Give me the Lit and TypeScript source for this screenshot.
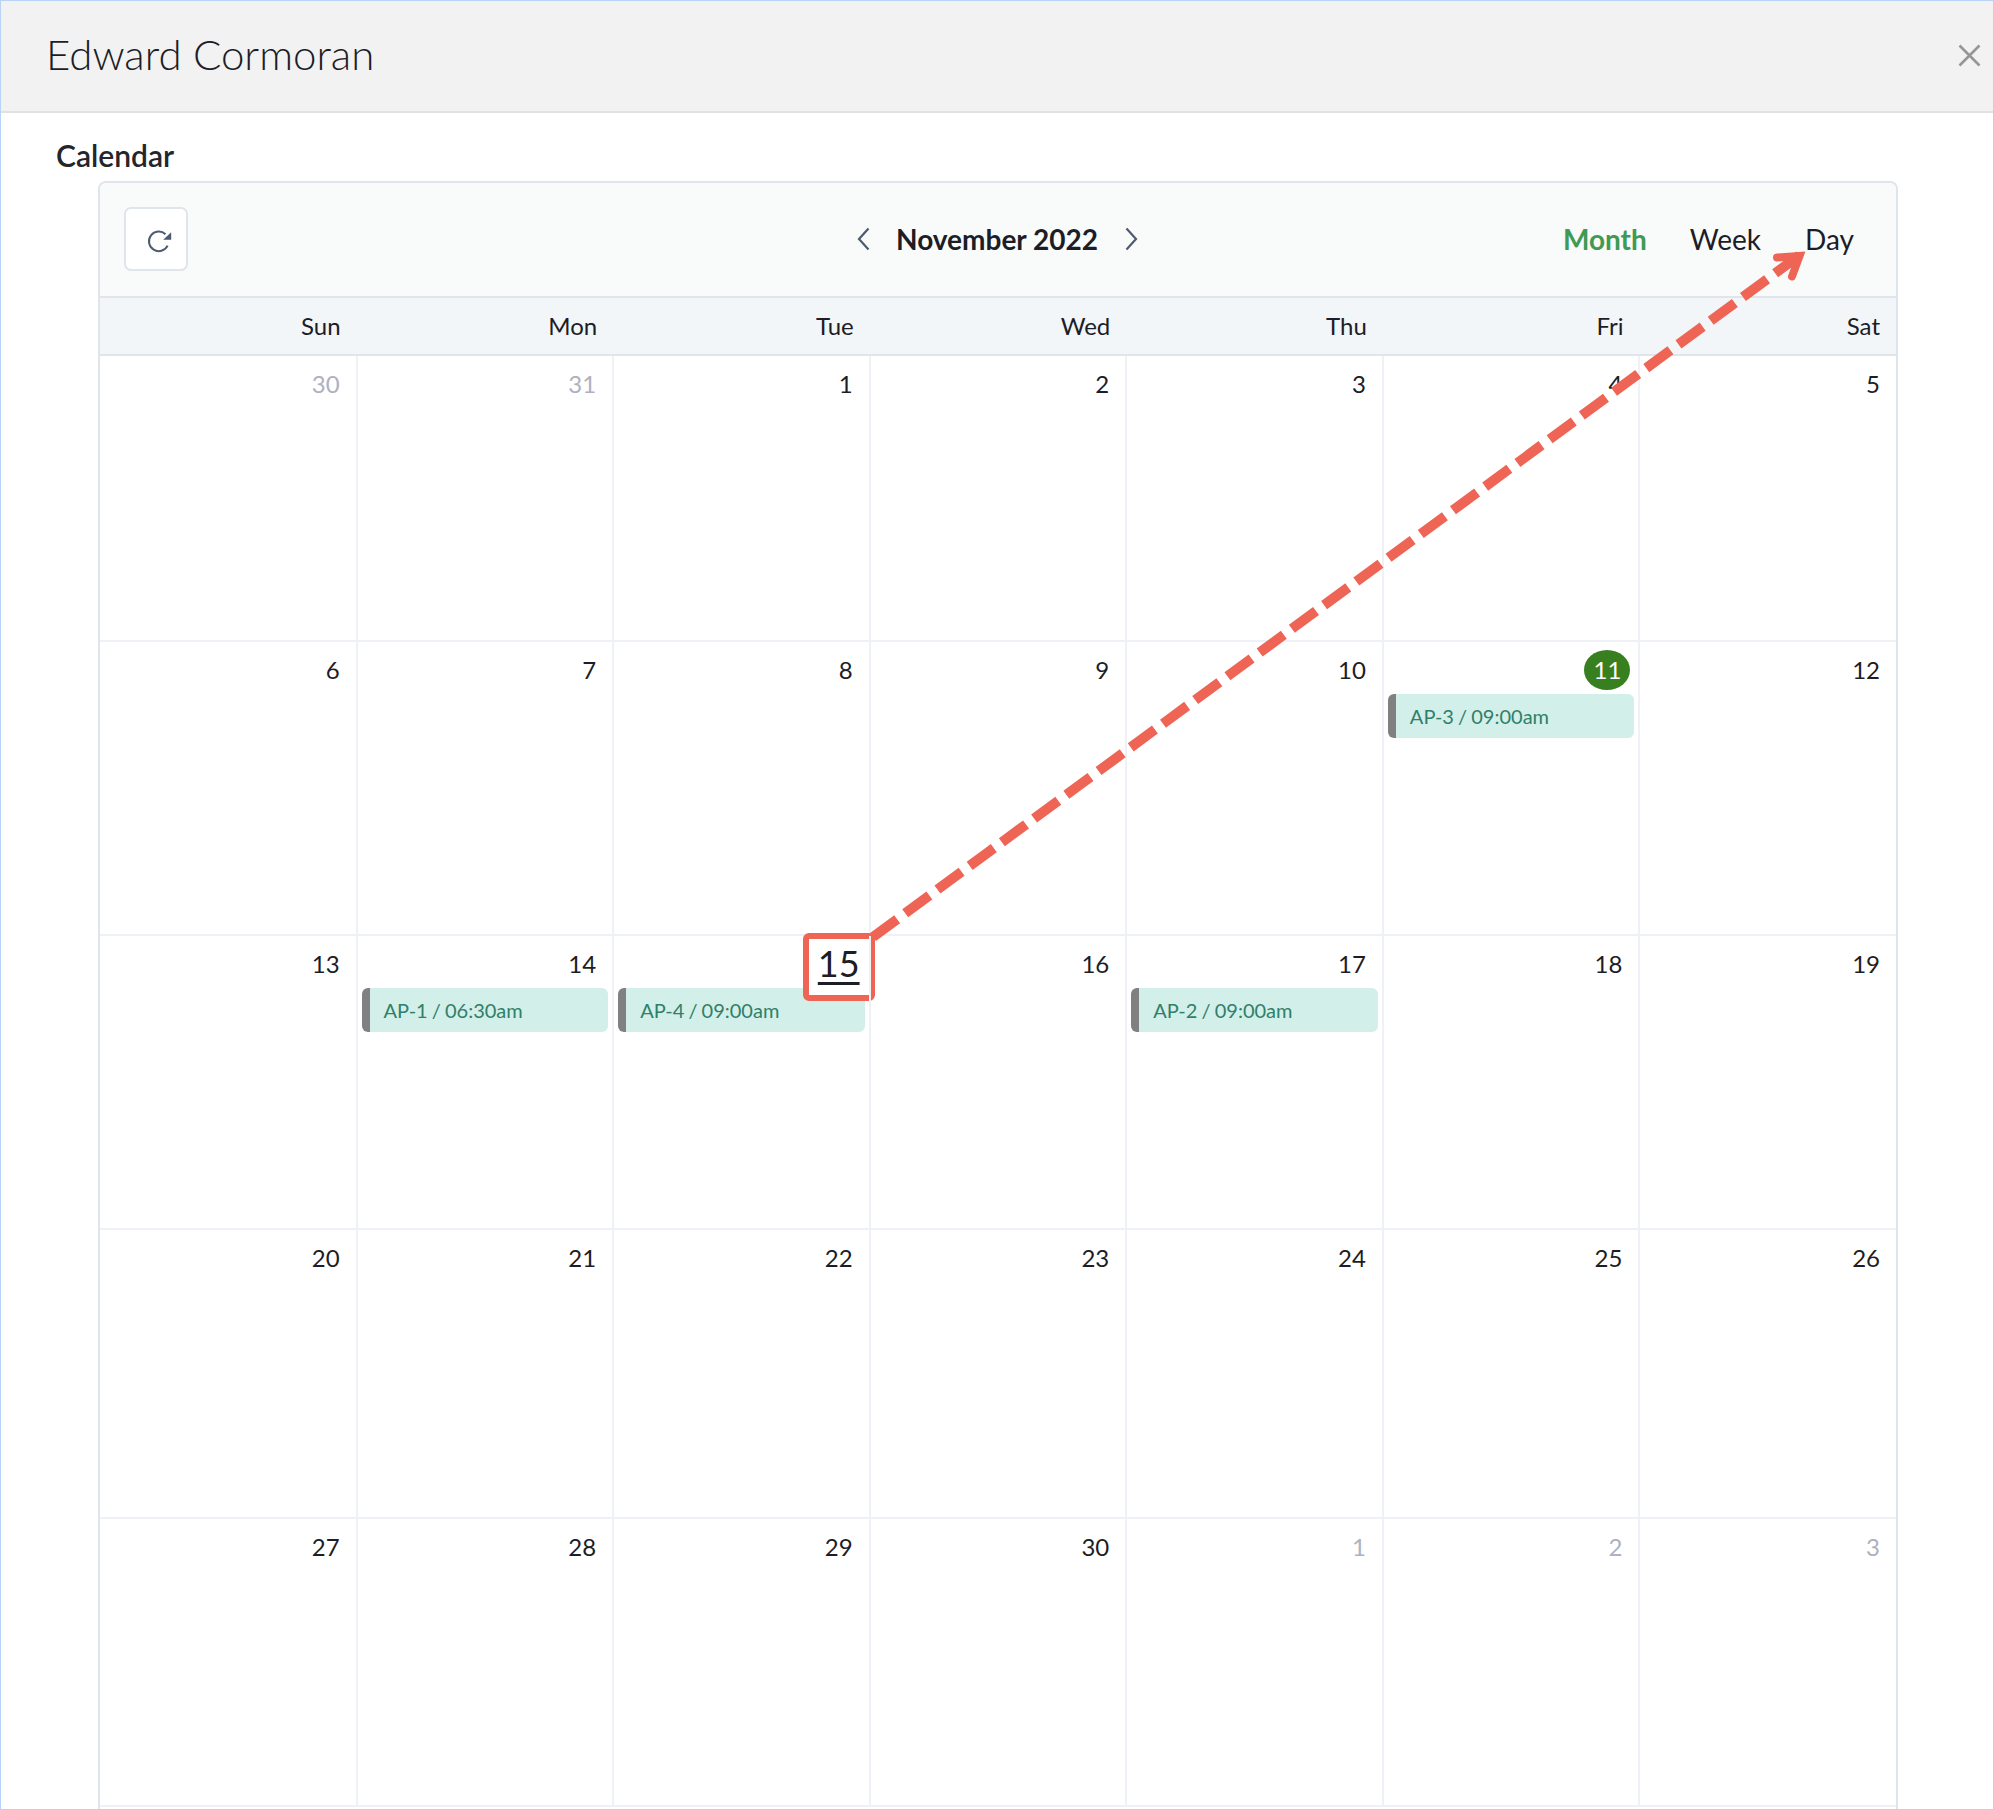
import { css, html, LitElement, nothing, svg } from "lit";
import { customElement } from "lit/decorators.js";

interface CalEvent {
  label: string;
}

interface DayCell {
  day: number;
  muted?: boolean;
  today?: boolean;
  marked?: boolean;
  event?: CalEvent;
}

const WEEKDAYS = ["Sun", "Mon", "Tue", "Wed", "Thu", "Fri", "Sat"];
const ROW_HEIGHTS = [286, 294, 294, 289, 288];

const WEEKS: DayCell[][] = [
  [
    { day: 30, muted: true },
    { day: 31, muted: true },
    { day: 1 },
    { day: 2 },
    { day: 3 },
    { day: 4 },
    { day: 5 },
  ],
  [
    { day: 6 },
    { day: 7 },
    { day: 8 },
    { day: 9 },
    { day: 10 },
    { day: 11, today: true, event: { label: "AP-3 / 09:00am" } },
    { day: 12 },
  ],
  [
    { day: 13 },
    { day: 14, event: { label: "AP-1 / 06:30am" } },
    { day: 15, marked: true, event: { label: "AP-4 / 09:00am" } },
    { day: 16 },
    { day: 17, event: { label: "AP-2 / 09:00am" } },
    { day: 18 },
    { day: 19 },
  ],
  [
    { day: 20 },
    { day: 21 },
    { day: 22 },
    { day: 23 },
    { day: 24 },
    { day: 25 },
    { day: 26 },
  ],
  [
    { day: 27 },
    { day: 28 },
    { day: 29 },
    { day: 30 },
    { day: 1, muted: true },
    { day: 2, muted: true },
    { day: 3, muted: true },
  ],
];

@customElement("app-root")
export class AppRoot extends LitElement {
  static override styles = css`
    :host {
      display: block;
      position: relative;
      box-sizing: border-box;
      width: 1994px;
      height: 1810px;
      overflow: hidden;
      background: #ffffff;
      border: 1px solid #b9d3f6;
      font-family: "Lato", "Liberation Sans", sans-serif;
      color: #1c1d26;
    }

    .header {
      display: flex;
      align-items: center;
      justify-content: space-between;
      box-sizing: border-box;
      height: 112px;
      padding: 0 12px 2px 45px;
      background: #f2f2f2;
      border-bottom: 2px solid #e1e1e1;
    }

    .header h1 {
      margin: -2px 0 0;
      font-size: 42px;
      font-weight: 300;
      line-height: 1;
    }

    .close {
      display: block;
      width: 23px;
      height: 23px;
      stroke: #969696;
      stroke-width: 2.6;
      fill: none;
    }

    .section-title {
      box-sizing: border-box;
      height: 68px;
      margin: 0;
      padding: 24px 0 0 55px;
      color: #24252d;
      font-size: 30px;
      font-weight: 600;
      line-height: 36px;
    }

    .calendar {
      box-sizing: border-box;
      width: 1800px;
      height: 1700px;
      margin-left: 97px;
      border: 2px solid #dfe5ea;
      border-bottom: none;
      border-radius: 8px 8px 0 0;
    }

    .toolbar {
      display: grid;
      grid-template-columns: 1fr auto 1fr;
      align-items: center;
      box-sizing: border-box;
      height: 115px;
      padding: 0 20px 2px 24px;
      background: #f9fbfa;
      border-bottom: 2px solid #dfe5ea;
      border-radius: 6px 6px 0 0;
    }

    .refresh {
      display: flex;
      align-items: center;
      justify-content: center;
      box-sizing: border-box;
      width: 64px;
      height: 64px;
      background: #ffffff;
      border: 2px solid #dfe5ea;
      border-radius: 7px;
    }

    .refresh svg {
      display: block;
      width: 32px;
      height: 32px;
      margin-left: -1px;
    }

    .month-nav {
      display: flex;
      align-items: center;
      gap: 26px;
      margin-right: 5px;
    }

    .month-nav svg {
      display: block;
      width: 13px;
      height: 24px;
      stroke: #4e5a70;
      stroke-width: 2.2;
      fill: none;
    }

    .month-nav svg:last-child {
      margin-left: 1px;
    }

    .month-name {
      font-size: 28px;
      font-weight: 700;
      line-height: 36px;
    }

    .views {
      display: flex;
      justify-content: flex-end;
    }

    .views span {
      padding: 0 22px;
      font-size: 28px;
      line-height: 36px;
    }

    .views .active {
      padding-right: 21px;
      color: #3f9a55;
      font-weight: 700;
    }

    .weekdays,
    .week {
      display: grid;
      grid-template-columns: repeat(7, 1fr);
    }

    .weekdays {
      box-sizing: border-box;
      height: 58px;
      background: #f3f6f8;
      border-bottom: 2px solid #dfe5ea;
    }

    .weekdays span {
      padding: 10px 16px 0 0;
      font-size: 24px;
      line-height: 36px;
      text-align: right;
    }

    .week {
      box-sizing: border-box;
      border-bottom: 2px solid #eef1f5;
    }

    .cell {
      position: relative;
      box-sizing: border-box;
      margin-left: -1px;
      padding-top: 8px;
      border-left: 2px solid #eef1f5;
    }

    .cell:first-child {
      margin-left: 0;
      border-left: none;
    }

    .date {
      display: flex;
      justify-content: flex-end;
      height: 40px;
      padding-right: 17px;
      font-size: 24px;
      line-height: 40px;
    }

    .cell:last-child .date {
      padding-right: 16px;
    }

    .date.muted {
      color: #aeb1c0;
    }

    .date .today {
      box-sizing: border-box;
      width: 46px;
      height: 40px;
      margin-right: -8px;
      background: #38801f;
      border-radius: 50%;
      color: #ffffff;
      text-align: center;
    }

    .event {
      box-sizing: border-box;
      height: 44px;
      margin: 4px 5px 0 4px;
      padding-left: 14px;
      background: #d3efe9;
      border-left: 8px solid #808080;
      border-radius: 6px;
      color: #2f8069;
      font-size: 20px;
      line-height: 44px;
      word-spacing: -1px;
    }

    .mark {
      position: absolute;
      top: -3px;
      right: -5px;
      display: flex;
      justify-content: center;
      box-sizing: border-box;
      width: 72px;
      height: 68px;
      background: #ffffff;
      border: 6px solid #ef6555;
      border-radius: 6px;
      font-size: 36px;
      line-height: 48px;
      text-decoration: underline;
      text-decoration-thickness: 2.5px;
      text-underline-offset: 5px;
    }

    .overlay {
      position: absolute;
      top: -1px;
      left: -1px;
      width: 1994px;
      height: 1810px;
      pointer-events: none;
    }
  `;

  private _renderCell(cell: DayCell) {
    return html`
      <div class="cell">
        <div class="date ${cell.muted ? "muted" : ""}">
          ${cell.today
            ? html`<span class="today">${cell.day}</span>`
            : cell.marked
              ? nothing
              : cell.day}
        </div>
        ${cell.event
          ? html`<div class="event">${cell.event.label}</div>`
          : nothing}
        ${cell.marked ? html`<div class="mark">${cell.day}</div>` : nothing}
      </div>
    `;
  }

  private _renderArrow() {
    return svg`
      <line
        x1="873" y1="937" x2="1800" y2="255"
        stroke="#ef6555" stroke-width="10"
        stroke-dasharray="30 10"
      />
      <path
        d="M1777 257.5L1799.5 256L1792 276.5"
        fill="none" stroke="#ef6555" stroke-width="8"
        stroke-linecap="round" stroke-linejoin="miter"
      />
    `;
  }

  override render() {
    return html`
      <header class="header">
        <h1>Edward Cormoran</h1>
        <svg class="close" viewBox="0 0 23 23">
          <path d="M1.5 1.5L21.5 21.5M21.5 1.5L1.5 21.5" />
        </svg>
      </header>
      <h2 class="section-title">Calendar</h2>
      <section class="calendar">
        <div class="toolbar">
          <div>
            <div class="refresh">
              <svg viewBox="0 0 32 32" fill="none">
                <path
                  d="M27.6 22.6A9.8 9.8 0 1 1 25.5 11.2"
                  stroke="#4e5a70"
                  stroke-width="2"
                />
                <path d="M23.2 16.8H31.2V9.2Z" fill="#4e5a70" />
              </svg>
            </div>
          </div>
          <div class="month-nav">
            <svg viewBox="0 0 13 24"><path d="M11.5 1.5L2 12L11.5 22.5" /></svg>
            <span class="month-name">November 2022</span>
            <svg viewBox="0 0 13 24"><path d="M1.5 1.5L11 12L1.5 22.5" /></svg>
          </div>
          <div class="views">
            <span class="active">Month</span>
            <span>Week</span>
            <span>Day</span>
          </div>
        </div>
        <div class="weekdays">
          ${WEEKDAYS.map((name) => html`<span>${name}</span>`)}
        </div>
        ${WEEKS.map(
          (week, i) => html`
            <div class="week" style="height: ${ROW_HEIGHTS[i]}px">
              ${week.map((cell) => this._renderCell(cell))}
            </div>
          `,
        )}
      </section>
      <svg class="overlay" viewBox="0 0 1994 1810">${this._renderArrow()}</svg>
    `;
  }
}

declare global {
  interface HTMLElementTagNameMap {
    "app-root": AppRoot;
  }
}
